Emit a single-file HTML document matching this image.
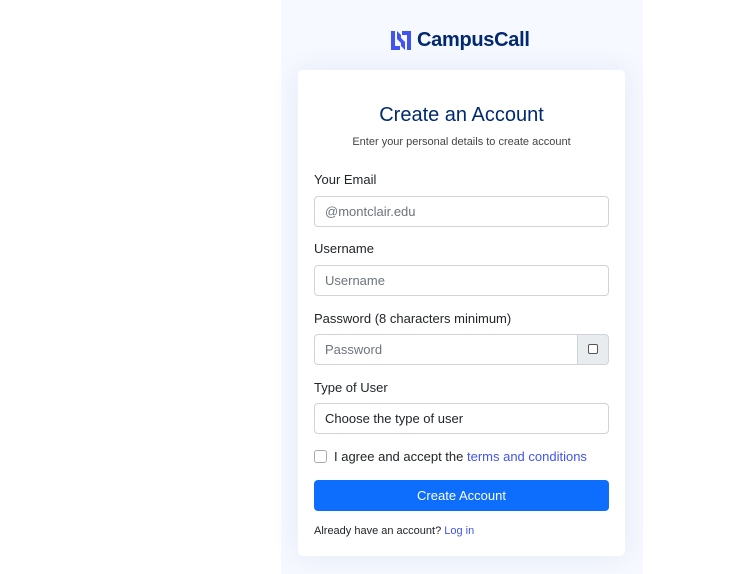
<!DOCTYPE html>
<html><head><style>
*{box-sizing:border-box}
body{margin:0;width:743px;height:574px;background:#fff;font-family:"Liberation Sans",sans-serif;position:relative;overflow:hidden}
.panel{position:absolute;left:281px;top:0;width:362px;height:574px;background:#f6f9ff}
.logo{position:absolute;left:391px;top:28px;height:24px;display:flex;align-items:center}
.logo span{font-size:20px;font-weight:bold;color:#012970;margin-left:6px;letter-spacing:-0.3px}
.card{position:absolute;left:298px;top:70px;width:327px;height:486px;background:#fff;border-radius:5px;box-shadow:0 0 30px rgba(1,41,112,0.08)}
h1{position:absolute;left:298px;width:327px;top:104px;margin:0;text-align:center;font-size:20px;font-weight:normal;color:#012970}
.sub{position:absolute;width:327px;left:298px;top:136px;text-align:center;font-size:11px;color:#444}
.lbl{position:absolute;left:314px;font-size:13px;color:#212529}
.inp{position:absolute;left:314px;width:295px;height:31px;border:1px solid #ced4da;border-radius:4px;font-size:13px;color:#6c757d;padding:7px 10px;background:#fff}
.btn{position:absolute;left:314px;top:480px;width:295px;height:31px;background:#0d6efd;border-radius:4px;color:#fff;font-size:13px;text-align:center;line-height:31px}
a{color:#4154f1;text-decoration:none}
</style></head><body>
<div class="panel"></div>
<div class="logo"><svg width="20" height="19" viewBox="0 0 20 19"><path d="M0 0h4v15h5v4H0z M6 0l4 4v8l-4-4z" fill="#4154f1"/><path d="M20 0v19h-4V4h-5v-4z M14 19l-4-4V7l4 4z" fill="#4154f1"/></svg><span>CampusCall</span></div>
<div class="card"></div>
<h1>Create an Account</h1>
<div class="sub">Enter your personal details to create account</div>
<div class="lbl" style="top:172px">Your Email</div>
<div class="inp" style="top:196px">@montclair.edu</div>
<div class="lbl" style="top:241px">Username</div>
<div class="inp" style="top:265px">Username</div>
<div class="lbl" style="top:311px">Password (8 characters minimum)</div>
<div class="inp" style="top:334px;width:264px;border-radius:4px 0 0 4px">Password</div>
<div style="position:absolute;left:577px;top:334px;width:32px;height:31px;background:#e9ecef;border:1px solid #ced4da;border-radius:0 4px 4px 0"><div style="position:absolute;left:10px;top:9px;width:10px;height:10px;border:1px solid #555;border-radius:2px;background:#fff"></div></div>
<div class="lbl" style="top:380px">Type of User</div>
<div class="inp" style="top:403px;color:#212529">Choose the type of user</div>
<div style="position:absolute;left:314px;top:450px;width:13px;height:13px;border:1px solid #aaa;border-radius:3px"></div>
<div class="lbl" style="left:334px;top:449px">I agree and accept the <a>terms and conditions</a></div>
<div class="btn">Create Account</div>
<div class="lbl" style="top:525px;font-size:11px">Already have an account? <a>Log in</a></div>
</body></html>
